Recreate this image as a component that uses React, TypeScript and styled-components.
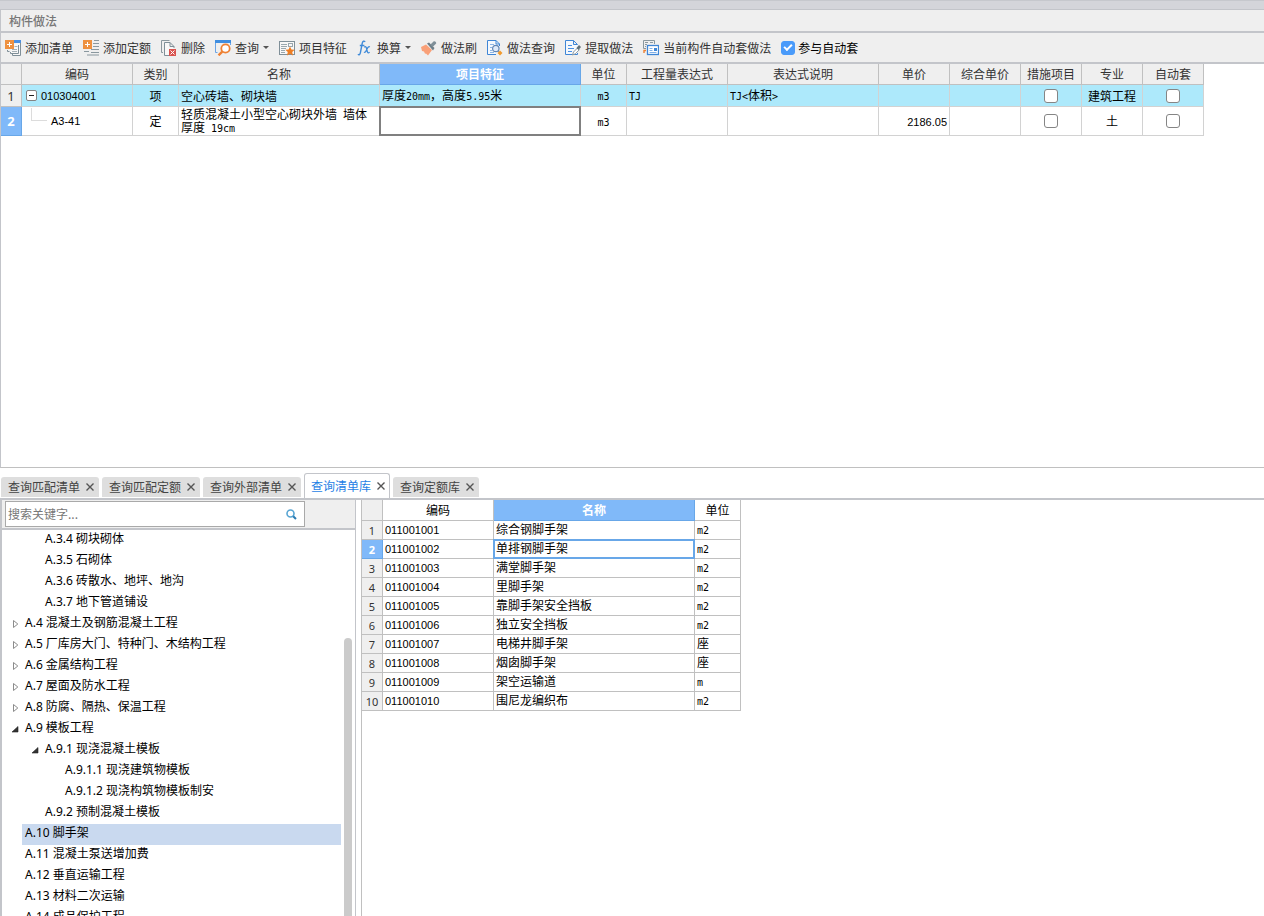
import React from "react";
import styled, { createGlobalStyle, css } from "styled-components";

const UI_FONT = `"Noto Sans CJK SC", sans-serif`;
const LINE = "#c3c5ca";
const GRID = "#c0c0c0";
const ACCENT = "#80b9f9";
const ACCENT_EDGE = "#68a7e8";

const GlobalStyle = createGlobalStyle`
  *, *::before, *::after { box-sizing: border-box; }
  body { margin: 0; background: #fff; font: 12px/16px ${UI_FONT}; color: #000; }
  button, input { font: inherit; color: inherit; }
`;

const Page = styled.div`
  display: flex;
  flex-direction: column;
  height: 100vh;
  overflow: hidden;
`;

const TopStrip = styled.div`
  flex: none;
  height: 10px;
  background: #d4d5da;
  border-top: 1px solid #c6c8cd;
  border-bottom: 1px solid ${LINE};
`;

const TitleBar = styled.h1`
  flex: none;
  display: flex;
  align-items: center;
  height: 23px;
  margin: 0;
  padding: 0 8px;
  background: #efefef;
  border-left: 1px solid ${LINE};
  border-bottom: 2px solid ${LINE};
  color: #777;
  font-size: 12px;
  font-weight: 500;
`;

const Toolbar = styled.div`
  flex: none;
  display: flex;
  align-items: center;
  gap: 10px;
  height: 31px;
  padding: 0 4px;
  background: #efefef;
  border-left: 1px solid ${LINE};
  border-bottom: 2px solid ${LINE};
  color: #333;
`;

const ToolButton = styled.button`
  display: flex;
  align-items: center;
  gap: 4px;
  padding: 0;
  border: 0;
  background: none;
  white-space: nowrap;

  svg { flex: none; }
`;

const Caret = styled.span`
  border: solid transparent;
  border-width: 3px 3px 0;
  border-top-color: #555;
`;

const CheckLabel = styled.label`
  display: flex;
  align-items: center;
  gap: 3px;
  color: #000;
  white-space: nowrap;
`;

const Checkbox = styled.input.attrs({ type: "checkbox" })`
  appearance: none;
  display: grid;
  place-items: center;
  width: 14px;
  height: 14px;
  margin: 0;
  border: 1px solid #858585;
  border-radius: 3px;
  background: #fff;

  &:checked {
    border-color: #4a9bfa;
    background: #4a9bfa;
  }
  &:checked::after {
    content: "";
    width: 8px;
    height: 5px;
    margin-bottom: 2px;
    border: solid #fff;
    border-width: 0 0 2px 2px;
    transform: rotate(-45deg);
  }
`;

const UpperPane = styled.section`
  flex: 9 1 0;
  min-height: 0;
  overflow: hidden;
  border-left: 1px solid ${LINE};
  border-bottom: 1px solid ${GRID};
`;

const LowerPane = styled.section`
  flex: 10 1 0;
  min-height: 0;
  display: flex;
  flex-direction: column;
`;

const Grid = styled.table`
  table-layout: fixed;
  width: 0;
  border-collapse: separate;
  border-spacing: 0;
`;

const Col = styled.col<{ $w: number }>`
  width: ${(p) => p.$w}px;
`;

const selected = css`
  background: ${ACCENT};
  border-color: ${ACCENT_EDGE};
  color: #fff;
  font-weight: 700;
`;

const Row = styled.tr<{ $h: number; $tint?: boolean }>`
  height: ${(p) => p.$h}px;
  background: ${(p) => (p.$tint ? "#ade9fb" : "#fff")};
`;

const HeadCell = styled.th<{ $on?: boolean; $plain?: boolean }>`
  padding: 0;
  border: solid ${GRID};
  border-width: 0 1px 1px 0;
  background: ${(p) => (p.$plain ? "#fff" : "#efefef")};
  color: ${(p) => (p.$plain ? "#000" : "#333")};
  font-weight: 400;
  line-height: 16px;
  white-space: nowrap;
  ${(p) => p.$on && selected}
`;

const NumberCell = styled(HeadCell)<{ $small?: boolean }>`
  font-family: "Noto Sans", sans-serif;
  font-size: ${(p) => (p.$small ? 11 : 13)}px;
  ${(p) => p.$small && "padding-top: 2px;"}
`;

const Cell = styled.td<{ $align?: string; $focus?: string; $dark?: boolean }>`
  position: relative;
  padding: ${(p) => (p.$dark ? "0 2px 2px" : "0 2px")};
  border: solid ${(p) => (p.$dark ? GRID : "#d2d2d2")};
  border-width: 0 1px 1px 0;
  text-align: ${(p) => p.$align || "left"};
  line-height: 12px;
  ${(p) =>
    p.$focus &&
    css`
      &::after {
        content: "";
        position: absolute;
        inset: -1px;
        border: 2px solid ${p.$focus};
        pointer-events: none;
      }
    `}

  ${Checkbox} { margin: 0 auto; }
`;

const Mono = styled.span`
  font: 10px/10px "DejaVu Sans Mono", monospace;
`;

const Digits = styled.span`
  font: 11px/12px "Liberation Sans", sans-serif;
`;

const CodeBox = styled.div`
  display: flex;
  align-items: center;
  gap: 4px;
  padding-left: 2px;
`;

const Branch = styled.span`
  width: 16px;
  height: 13px;
  margin: 0 0 13px 5px;
  border: solid #dcdcdc;
  border-width: 0 0 1px 1px;
`;

const Collapse = styled.button`
  display: grid;
  place-items: center;
  width: 11px;
  height: 11px;
  padding: 0;
  border: 1px solid #848484;
  border-radius: 2px;
  background: #fff;

  &::after {
    content: "";
    width: 5px;
    height: 1px;
    background: #222;
  }
`;

const TabBar = styled.div`
  flex: none;
  display: flex;
  align-items: flex-end;
  gap: 3px;
  height: 32px;
  padding-left: 1px;
  border-bottom: 2px solid ${LINE};
`;

const Tab = styled.div<{ $on?: boolean }>`
  display: flex;
  align-items: center;
  gap: 5px;
  height: 20px;
  margin-bottom: 1px;
  padding: 0 4px 0 7px;
  border-radius: 3px 3px 0 0;
  background: #dedede;
  color: #444;
  ${(p) =>
    p.$on &&
    css`
      height: 25px;
      margin-bottom: 0;
      padding: 0 3px 0 6px;
      border: 1px solid ${LINE};
      border-bottom: 0;
      background: #fff;
      color: #1f7fe5;
    `}
`;

const TabButton = styled.button`
  padding: 0;
  border: 0;
  background: none;
  white-space: nowrap;
`;

const CloseButton = styled.button`
  display: flex;
  padding: 0;
  border: 0;
  background: none;
  color: #555;
`;

const LowerBody = styled.div`
  flex: 1;
  min-height: 0;
  display: flex;
  gap: 5px;
`;

const SidePanel = styled.aside`
  flex: none;
  display: flex;
  flex-direction: column;
  width: 356px;
  border: solid ${LINE};
  border-width: 0 1px 0 2px;
`;

const SearchBar = styled.div`
  flex: none;
  height: 30px;
  padding: 1px 50px 1px 3px;
  background: #efefef;
  border-bottom: 2px solid ${LINE};
`;

const SearchBox = styled.div`
  display: flex;
  align-items: center;
  height: 26px;
  padding: 0 7px 0 2px;
  border: 1px solid #a9a9a9;
  background: #fff;
`;

const SearchInput = styled.input`
  flex: 1;
  min-width: 0;
  padding: 0;
  border: 0;
  outline: 0;
  background: none;

  &::placeholder { color: #777; opacity: 1; }
`;

const IconButton = styled.button`
  display: flex;
  padding: 0;
  border: 0;
  background: none;
`;

const TreeArea = styled.div`
  flex: 1;
  min-height: 0;
  display: flex;
  gap: 3px;
  padding-right: 3px;
  overflow: hidden;
`;

const Tree = styled.ul`
  flex: 1;
  margin: 0;
  padding: 0;
  list-style: none;
  font-family: "Noto Sans", ${UI_FONT};
`;

const TreeRow = styled.li<{ $level: number }>`
  display: flex;
  height: 21px;
  padding-left: ${(p) => (p.$level - 1) * 20}px;
`;

const Toggle = styled.button`
  flex: none;
  display: flex;
  align-items: center;
  width: 20px;
  padding: 0 0 1px 9px;
  border: 0;
  background: none;
`;

const TreeLabel = styled.span<{ $on?: boolean }>`
  flex: 1;
  padding-left: 3px;
  line-height: 18px;
  white-space: nowrap;
  background: ${(p) => (p.$on ? "#c9d9ef" : "transparent")};
`;

const ScrollTrack = styled.div`
  flex: none;
  display: flex;
  width: 8px;
  padding-top: 108px;
`;

const ScrollThumb = styled.div`
  flex: 1;
  border-radius: 4px 4px 0 0;
  background: #cbcbcb;
`;

const ResultPanel = styled.div`
  flex: 1;
  min-width: 0;
  border-left: 1px solid ${GRID};
  overflow: hidden;
`;

/* ---------- icons ---------- */

const Svg = ({ children, w = 16, h = 16 }: { children: React.ReactNode; w?: number; h?: number }) => (
  <svg width={w} height={h} viewBox={`0 0 ${w} ${h}`} fill="none" aria-hidden="true">
    {children}
  </svg>
);

const PlusTile = () => (
  <>
    <rect width="9" height="9" fill="#ee9140" />
    <path d="M4.5 2v5M2 4.5h5" stroke="#fff" />
  </>
);

const AddListIcon = () => (
  <Svg>
    <path d="M5.500 3.500h10v12h-8v-2h-2z" fill="#f7f7f7" />
    <path d="M9 0h7v3H9z" fill="#4a90e2" />
    <path d="M15.500 3v12.500h-8V14M13.500 5v8.500h-8V12M2.500 10v1.500h2" stroke="#7f8f98" />
    <path d="M9.500 6.500h3M7 9.500h5M7 11.500h5" stroke="#a5b0b6" />
    <PlusTile />
  </Svg>
);

const AddQuotaIcon = () => (
  <Svg>
    <path d="M11 .5h5M10 3.500h6M10 6.500h6M8 9.500h8M1 11.500h5M8 12.500h8M4 15h12" stroke="#8a989f" />
    <PlusTile />
  </Svg>
);

const DeleteIcon = () => (
  <Svg>
    <path d="M2 12.500H.5V.5h8" stroke="#8a989f" />
    <path d="M8 15.500H3.500v-13h5.500l4 4V8M9 2.500v4h4" stroke="#7f8f98" fill="#f7f7f7" />
    <rect x="8" y="9" width="7" height="7" fill="#d9534f" />
    <path d="m9.500 10.500 4 4M13.500 10.500l-4 4" stroke="#fff" />
  </Svg>
);

const QueryIcon = () => (
  <Svg>
    <path d="M.5 2v10.500h2M15.500 2v3" stroke="#6aa5e6" />
    <path d="M0 0h16v3H0z" fill="#3f8ee0" />
    <circle cx="10.500" cy="8.500" r="4.200" fill="#fff" stroke="#ee8133" strokeWidth="1.800" />
    <path d="m7.300 11.700-3.800 3.600" stroke="#ee8133" strokeWidth="2.400" />
  </Svg>
);

const FeatureIcon = () => (
  <Svg>
    <rect x=".5" y="1.500" width="15" height="13" stroke="#7f8f98" fill="#f7f7f7" />
    <path d="M2 4.500h6M2 6.500h6M2 8.500h5M2 10.500h4M2 12.500h4" stroke="#9aa7ae" />
    <rect x="9.500" y="3.500" width="4" height="3" stroke="#9aa7ae" />
    <path d="m11 6.500 1.400 3 3.300.3-2.500 2.200.8 3.500-3-1.800-3 1.800.8-3.500-2.500-2.200 3.300-.3z" fill="#ee7d22" />
  </Svg>
);

const FxIcon = () => (
  <Svg>
    <path
      d="M8.200 1.800C7 .6 5.700 1 5.200 3.400L3.400 12.600C3 14.800 2 15.300.9 14.300M2.800 5.500h4.600"
      stroke="#3f8ad8"
      strokeWidth="1.400"
    />
    <path
      d="M7.200 7.200c1.300-1.300 1.900-.5 2.400 1.500l.6 2.500c.5 2 1.300 2.100 2.400.9M12.800 7c-1-.8-1.800.2-2.700 1.900s-1.800 4.200-3.100 3.200"
      stroke="#3f8ad8"
      strokeWidth="1.300"
    />
  </Svg>
);

const BrushIcon = () => (
  <Svg>
    <path d="m0 7 5-2.500L11 10l-4 5.500-2-2-1 .3-1-2.300-2-.5z" fill="#f9a078" />
    <path d="m6 3.500 2-1L13.500 8l-1.500 2.500z" fill="#6d7f89" />
    <path d="m9.500 4.500 3-3c1.200-1.200 3.600 1 2.400 2.200l-3 3z" fill="#7f8f98" />
  </Svg>
);

const SheetSearchIcon = () => (
  <Svg>
    <path d="M12.500 6V4l-3.500-3.500H.5v14H9M9 .5V4h3.500" stroke="#3f86d6" fill="#f4f8fd" />
    <path d="M3 4.500h4M3 7.500h2M3 10.500h2M3 12.500h4" stroke="#8db6e6" />
    <circle cx="8.800" cy="8.500" r="3.200" stroke="#6487b4" fill="#dfeafa" strokeWidth="1.200" />
    <path d="m11.200 11 1 1" stroke="#6487b4" />
    <path d="m13 10.500 2.500 2.500-2.500 2.500-2.500-2.500z" fill="#f29a2e" />
  </Svg>
);

const SheetPenIcon = () => (
  <Svg>
    <path d="M12.500 13v1.500H.5V.5h8l4 4M8.500.5v4h4" stroke="#3f86d6" fill="#f4f8fd" />
    <path d="M3 5.500h4M3 8.500h6M3 11.500h4" stroke="#4a90e2" />
    <path d="m7.500 15 1-3 4-4 1.800 1.800-4 4z" fill="#fff" stroke="#8a989f" />
    <path d="m11.500 8 2.500-3 2 2-2.500 3z" fill="#5f6f78" />
  </Svg>
);

const AutoIcon = () => (
  <Svg>
    <path d="M3 8.500H.5v-8h11V4M2 2.500h3M2 4.500h2M2 6.500h1M7 2.500h3" stroke="#8a989f" />
    <path d="M1 13v-2.500h2" stroke="#ee8133" strokeWidth="1.400" />
    <rect x="4.500" y="5.500" width="11" height="9" stroke="#3f86d6" strokeWidth="1.300" fill="#fff" />
    <path d="M6.500 8.500h3M6.500 10.500h3M6.500 12.500h7" stroke="#7fb0e8" />
    <rect x="11" y="8" width="3" height="3" fill="#3f86d6" />
  </Svg>
);

const CloseIcon = () => (
  <Svg w={10} h={10}>
    <path d="m1.500 1.500 7 7M8.500 1.500l-7 7" stroke="currentColor" strokeWidth="1.400" />
  </Svg>
);

const SearchIcon = () => (
  <Svg w={11} h={11}>
    <circle cx="4.500" cy="4.500" r="3.500" stroke="#58a5d3" strokeWidth="1.600" />
    <path d="m7.200 7.200 2.800 2.800" stroke="#2b7db3" strokeWidth="2" />
  </Svg>
);

const ClosedMark = () => (
  <Svg w={8} h={10}>
    <path d="M2.500 1.500v7L6.800 5z" stroke="#8c8c8c" fill="#fff" />
  </Svg>
);

const OpenMark = () => (
  <Svg w={8} h={8}>
    <path d="M7 1.500V7H1z" fill="#333" stroke="#222" strokeWidth=".6" />
  </Svg>
);

/* ---------- data ---------- */

const tools = [
  { label: "添加清单", icon: <AddListIcon /> },
  { label: "添加定额", icon: <AddQuotaIcon /> },
  { label: "删除", icon: <DeleteIcon /> },
  { label: "查询", icon: <QueryIcon />, menu: true },
  { label: "项目特征", icon: <FeatureIcon /> },
  { label: "换算", icon: <FxIcon />, menu: true },
  { label: "做法刷", icon: <BrushIcon /> },
  { label: "做法查询", icon: <SheetSearchIcon /> },
  { label: "提取做法", icon: <SheetPenIcon /> },
  { label: "当前构件自动套做法", icon: <AutoIcon /> },
];

const columns: [string, number][] = [
  ["编码", 111],
  ["类别", 46],
  ["名称", 201],
  ["项目特征", 201],
  ["单位", 46],
  ["工程量表达式", 101],
  ["表达式说明", 151],
  ["单价", 71],
  ["综合单价", 71],
  ["措施项目", 61],
  ["专业", 61],
  ["自动套", 61],
];

const tabs = ["查询匹配清单", "查询匹配定额", "查询外部清单", "查询清单库", "查询定额库"];
const ACTIVE_TAB = "查询清单库";

type Node = { text: string; level: number; state?: "open" | "closed"; on?: boolean };
const nodes: Node[] = [
  { text: "A.3.4 砌块砌体", level: 2 },
  { text: "A.3.5 石砌体", level: 2 },
  { text: "A.3.6 砖散水、地坪、地沟", level: 2 },
  { text: "A.3.7 地下管道铺设", level: 2 },
  { text: "A.4 混凝土及钢筋混凝土工程", level: 1, state: "closed" },
  { text: "A.5 厂库房大门、特种门、木结构工程", level: 1, state: "closed" },
  { text: "A.6 金属结构工程", level: 1, state: "closed" },
  { text: "A.7 屋面及防水工程", level: 1, state: "closed" },
  { text: "A.8 防腐、隔热、保温工程", level: 1, state: "closed" },
  { text: "A.9 模板工程", level: 1, state: "open" },
  { text: "A.9.1 现浇混凝土模板", level: 2, state: "open" },
  { text: "A.9.1.1 现浇建筑物模板", level: 3 },
  { text: "A.9.1.2 现浇构筑物模板制安", level: 3 },
  { text: "A.9.2 预制混凝土模板", level: 2 },
  { text: "A.10 脚手架", level: 1, on: true },
  { text: "A.11 混凝土泵送增加费", level: 1 },
  { text: "A.12 垂直运输工程", level: 1 },
  { text: "A.13 材料二次运输", level: 1 },
  { text: "A.14 成品保护工程", level: 1 },
];

const results = [
  ["011001001", "综合钢脚手架", "m2"],
  ["011001002", "单排钢脚手架", "m2"],
  ["011001003", "满堂脚手架", "m2"],
  ["011001004", "里脚手架", "m2"],
  ["011001005", "靠脚手架安全挡板", "m2"],
  ["011001006", "独立安全挡板", "m2"],
  ["011001007", "电梯井脚手架", "座"],
  ["011001008", "烟囱脚手架", "座"],
  ["011001009", "架空运输道", "m"],
  ["011001010", "围尼龙编织布", "m2"],
];

/* Latin runs are set in a half-width face beside the full-width characters. */
const Mixed = ({ text }: { text: string }) => (
  <>
    {text.split(/([\x20-\x7e]+)/).map((part, i) => (i % 2 ? <Mono key={i}>{part}</Mono> : part))}
  </>
);

const MethodGrid = () => (
  <Grid aria-label="构件做法">
    <colgroup>
      <Col $w={21} />
      {columns.map(([name, w]) => (
        <Col key={name} $w={w} />
      ))}
    </colgroup>
    <thead>
      <Row $h={21}>
        <HeadCell />
        {columns.map(([name]) => (
          <HeadCell key={name} scope="col" $on={name === "项目特征"}>
            {name}
          </HeadCell>
        ))}
      </Row>
    </thead>
    <tbody>
      <Row $h={22} $tint>
        <NumberCell scope="row">1</NumberCell>
        <Cell>
          <CodeBox>
            <Collapse aria-label="收起" />
            <Digits>010304001</Digits>
          </CodeBox>
        </Cell>
        <Cell $align="center">项</Cell>
        <Cell>空心砖墙、砌块墙</Cell>
        <Cell>
          <Mixed text="厚度20mm，高度5.95米" />
        </Cell>
        <Cell $align="center">
          <Mono>m3</Mono>
        </Cell>
        <Cell>
          <Mono>TJ</Mono>
        </Cell>
        <Cell>
          <Mixed text="TJ<体积>" />
        </Cell>
        <Cell />
        <Cell />
        <Cell>
          <Checkbox aria-label="措施项目" />
        </Cell>
        <Cell $align="center">建筑工程</Cell>
        <Cell>
          <Checkbox aria-label="自动套" />
        </Cell>
      </Row>
      <Row $h={29}>
        <NumberCell scope="row" $on>
          2
        </NumberCell>
        <Cell>
          <CodeBox>
            <Branch />
            <Digits>A3-41</Digits>
          </CodeBox>
        </Cell>
        <Cell $align="center">定</Cell>
        <Cell>
          <Mixed text="轻质混凝土小型空心砌块外墙 墙体厚度 19cm" />
        </Cell>
        <Cell $focus="#808080" />
        <Cell $align="center">
          <Mono>m3</Mono>
        </Cell>
        <Cell />
        <Cell />
        <Cell $align="right">
          <Digits>2186.05</Digits>
        </Cell>
        <Cell />
        <Cell>
          <Checkbox aria-label="措施项目" />
        </Cell>
        <Cell $align="center">土</Cell>
        <Cell>
          <Checkbox aria-label="自动套" />
        </Cell>
      </Row>
    </tbody>
  </Grid>
);

const ResultGrid = () => (
  <Grid aria-label="清单库">
    <colgroup>
      <Col $w={21} />
      <Col $w={111} />
      <Col $w={201} />
      <Col $w={46} />
    </colgroup>
    <thead>
      <Row $h={21}>
        <HeadCell />
        <HeadCell scope="col" $plain>编码</HeadCell>
        <HeadCell scope="col" $on>名称</HeadCell>
        <HeadCell scope="col" $plain>单位</HeadCell>
      </Row>
    </thead>
    <tbody>
      {results.map(([code, name, unit], i) => (
        <Row key={code} $h={19}>
          <NumberCell scope="row" $small $on={i === 1}>
            {i + 1}
          </NumberCell>
          <Cell $dark>
            <Digits>{code}</Digits>
          </Cell>
          <Cell $dark $focus={i === 1 ? ACCENT_EDGE : undefined}>
            {name}
          </Cell>
          <Cell $dark>
            <Mixed text={unit} />
          </Cell>
        </Row>
      ))}
    </tbody>
  </Grid>
);

export default function App() {
  return (
    <Page>
      <GlobalStyle />
      <TopStrip />
      <TitleBar>构件做法</TitleBar>
      <Toolbar>
        {tools.map((t) => (
          <ToolButton key={t.label}>
            {t.icon}
            {t.label}
            {t.menu && <Caret />}
          </ToolButton>
        ))}
        <CheckLabel>
          <Checkbox defaultChecked />
          参与自动套
        </CheckLabel>
      </Toolbar>
      <UpperPane>
        <MethodGrid />
      </UpperPane>
      <LowerPane>
        <TabBar>
          {tabs.map((name) => (
            <Tab key={name} $on={name === ACTIVE_TAB}>
              <TabButton>{name}</TabButton>
              <CloseButton aria-label={`关闭${name}`}>
                <CloseIcon />
              </CloseButton>
            </Tab>
          ))}
        </TabBar>
        <LowerBody>
          <SidePanel>
            <SearchBar>
              <SearchBox>
                <SearchInput type="text" aria-label="搜索" placeholder="搜索关键字..." />
                <IconButton aria-label="搜索">
                  <SearchIcon />
                </IconButton>
              </SearchBox>
            </SearchBar>
            <TreeArea>
              <Tree>
                {nodes.map((n) => (
                  <TreeRow key={n.text} $level={n.level}>
                    <Toggle aria-label="展开或收起" disabled={!n.state}>
                      {n.state === "closed" && <ClosedMark />}
                      {n.state === "open" && <OpenMark />}
                    </Toggle>
                    <TreeLabel $on={n.on}>{n.text}</TreeLabel>
                  </TreeRow>
                ))}
              </Tree>
              <ScrollTrack>
                <ScrollThumb />
              </ScrollTrack>
            </TreeArea>
          </SidePanel>
          <ResultPanel>
            <ResultGrid />
          </ResultPanel>
        </LowerBody>
      </LowerPane>
    </Page>
  );
}
